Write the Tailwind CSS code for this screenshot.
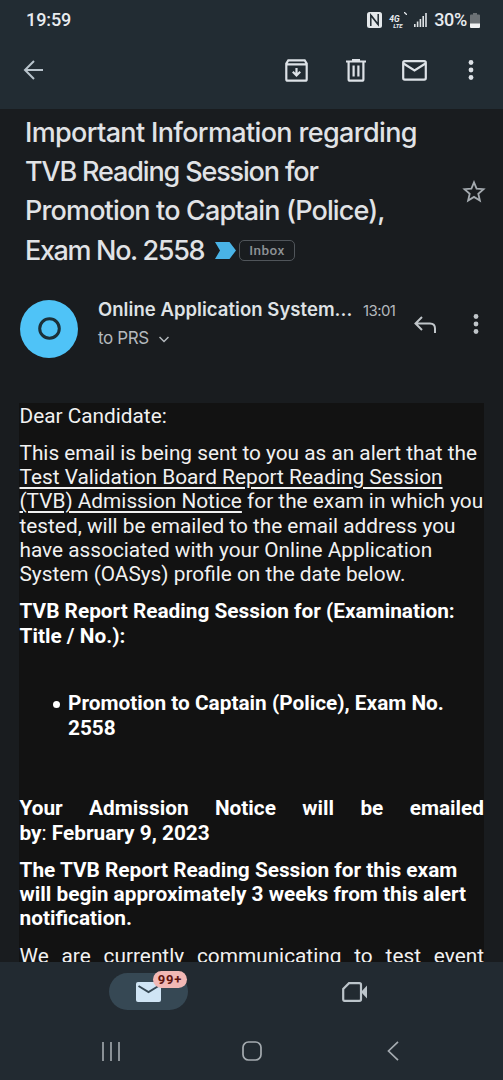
<!DOCTYPE html>
<html lang="en">
  <head>
    <meta charset="UTF-8" />
    <meta name="viewport" content="width=device-width, initial-scale=1.0" />
    <title>Mail</title>
    <script src="https://cdn.jsdelivr.net/npm/@tailwindcss/browser@4"></script>
  </head>

  <body class="bg-[#191c1f] w-[503px] h-[1080px] overflow-hidden flex flex-col font-['Roboto',sans-serif]">
    <header class="bg-[#222c33] h-[109px] shrink-0">
      <!-- Status bar -->
      <div class="h-10 flex items-center justify-between pl-[26px] pr-[23px] text-[#e8ebef]">
        <span class="text-[18px] font-medium leading-none tracking-[-0.1px]">19:59</span>
        <div class="flex items-center">
          <svg class="w-[15px] h-[16px] mr-[7px]" viewBox="0 0 15 16">
            <rect width="15" height="16" rx="2.5" fill="#e4e8eb" />
            <path d="M3.800 14V3.200L11 12.500M11.200 2v10.500L4.200 3.500" fill="none" stroke="#222c33" stroke-width="1.5" />
          </svg>
          <div class="relative w-[17px] h-[16px] mr-[8px] font-bold italic">
            <div class="flex flex-col pt-[3px]">
              <span class="text-[8.500px] leading-[8px]">4G</span>
              <span class="pl-[4px] text-[6px] leading-[6px]">LTE</span>
            </div>
            <svg class="absolute right-[-1px] top-0 w-[3px] h-[3px]" viewBox="0 0 3 3"><path d="M0 0l3 3" stroke="#e4e8eb" stroke-width="1.300" /></svg>
          </div>
          <svg class="w-[13px] h-[14px] mr-[7px]" viewBox="0 0 13 14" fill="#dfe3e6">
            <rect x="0" y="11" width="1.6" height="3" />
            <rect x="2.8" y="8.5" width="1.6" height="5.5" />
            <rect x="5.6" y="6" width="1.6" height="8" />
            <rect x="8.4" y="3" width="1.6" height="11" />
            <rect x="11.2" y="0" width="1.6" height="14" />
          </svg>
          <span class="text-[18px] font-medium leading-none tracking-[-0.3px] mr-[3px]">30%</span>
          <svg class="w-[10px] h-[15px]" viewBox="0 0 10 15">
            <path d="M3 0h4v1.500h2q1 0 1 1V11H0V2.500q0-1 1-1h2z" fill="#6b7175" />
            <path d="M0 10.500h10V14q0 1-1 1H1q-1 0-1-1z" fill="#f1f3f4" />
          </svg>
        </div>
      </div>
      <!-- Toolbar -->
      <div class="h-[60px] flex items-center text-[#dde2e7] pl-[23px]">
        <svg class="w-[21px] h-[20px]" viewBox="0 0 21 20" fill="none" stroke="#b9c4cc" stroke-width="2">
          <path d="M20 10H2M11 1L2 10l9 9" />
        </svg>
        <svg class="w-[23px] h-[23px] ml-[241px]" viewBox="0 0 23 23" fill="none" stroke="currentColor" stroke-width="2.2">
          <path d="M1.300 4.500L3.300 1.300h16.400L21.700 4.500v15.700q0 1.500-1.500 1.500H2.800q-1.500 0-1.500-1.500zM2 5.300h19" />
          <path d="M11.500 9v7M7.800 12.800l3.700 3.700 3.700-3.700" />
        </svg>
        <svg class="w-[20px] h-[23px] ml-[38px]" viewBox="0 0 20 23" fill="none" stroke="currentColor" stroke-width="2.200">
          <path d="M0 2.500h20M6 1.100h8M2.600 3v17.200q0 1.500 1.500 1.500h11.800q1.500 0 1.500-1.500V3" />
          <path d="M7.600 6.500v11M12.400 6.500v11" />
        </svg>
        <svg class="w-[25px] h-[21px] ml-[36px]" viewBox="0 0 25 21" fill="none" stroke="currentColor" stroke-width="2.200">
          <rect x="1.200" y="1.200" width="22.600" height="18.400" rx="1.500" />
          <path d="M1.500 3.500l11 7 11-7" />
        </svg>
        <svg class="w-[6px] h-[20px] ml-[41px]" viewBox="0 0 6 20" fill="currentColor">
          <circle cx="3" cy="2.500" r="2.400" /><circle cx="3" cy="10" r="2.400" /><circle cx="3" cy="17.500" r="2.400" />
        </svg>
      </div>
    </header>

    <main class="h-[853px] shrink-0 overflow-hidden">
      <!-- Subject -->
      <div class="flex pt-[4px] pl-[25px] h-[173px]">
        <h1 class="w-[437px] font-['Inter',sans-serif] font-medium text-[27px] leading-[39.2px] text-[#e1e3e6] whitespace-nowrap">
          <span class="block tracking-[-0.65px]">Important Information regarding</span>
          <span class="block tracking-[-1.15px]">TVB Reading Session for</span>
          <span class="block tracking-[-0.85px]">Promotion to Captain (Police),</span>
          <span class="flex items-center">
            <span class="tracking-[-1.35px] w-[190px]">Exam No. 2558</span>
            <svg class="w-[21px] h-[17px] mr-[3px]" viewBox="0 0 21 17"><path d="M0 0h14.500L21 8.500 14.500 17H0l5-8.500z" fill="#49b3e6" /></svg>
            <span class="w-[56px] h-[21px] border border-[#50555a] rounded-[5px] flex items-center justify-center font-['Roboto',sans-serif] text-[13.500px] font-medium tracking-[0.5px] text-[#8d9195]">Inbox</span>
          </span>
        </h1>
        <svg class="w-[24px] h-[23px] mt-[67px]" viewBox="0 0 24 23" fill="none" stroke="#a5abb0" stroke-width="1.800">
          <path d="M12 2.300l2.600 6.300 6.900.6-5.200 4.500 1.600 6.800-5.900-3.600-5.900 3.600 1.600-6.800-5.200-4.500 6.900-.6z" />
        </svg>
      </div>

      <!-- Sender -->
      <div class="flex pl-5 h-[121px] font-['Inter',sans-serif]">
        <div class="mt-[18px] w-[58px] h-[58px] rounded-full bg-[#4fc3f7] flex justify-center pt-[17px]">
          <svg class="w-[23px] h-[23px]" viewBox="0 0 23 23"><circle cx="11.500" cy="11.500" r="9.800" fill="none" stroke="#1b3039" stroke-width="3" /></svg>
        </div>
        <div class="ml-5 w-[316px] pt-[15px]">
          <div class="flex h-[26px] items-center whitespace-nowrap">
            <span class="w-[265px] text-[18.500px] font-semibold tracking-[0.04px] text-[#dfe2e5]">Online Application System...</span>
            <span class="text-[15px] text-[#b4b9bd] tracking-[-0.6px] pt-[2px]">13:01</span>
          </div>
          <div class="flex items-center h-[26px] mt-[3px] text-[#b4b9bd]">
            <span class="w-[61px] text-[17px] tracking-[-0.4px]">to PRS</span>
            <svg class="w-[10px] h-[7px] mt-px" viewBox="0 0 10 7" fill="none" stroke="currentColor" stroke-width="1.500"><path d="M.5 1L5 5.500 9.500 1" /></svg>
          </div>
        </div>
        <svg class="mt-[34px] w-[22px] h-[18px]" viewBox="0 0 22 18" fill="none" stroke="#c0c5c9" stroke-width="2">
          <path d="M8 1L1.500 7.500 8 14M2 7.500h14q5 0 5 5V17" />
        </svg>
        <svg class="mt-[32px] ml-[37px] w-[6px] h-[20px]" viewBox="0 0 6 20" fill="#c0c5c9">
          <circle cx="3" cy="2.500" r="2.400" /><circle cx="3" cy="10" r="2.400" /><circle cx="3" cy="17.500" r="2.400" />
        </svg>
      </div>

      <!-- Message -->
      <article class="ml-[19px] w-[465px] pt-[0.500px] pl-[0.500px] h-[600px] bg-[#121212] text-[#f1f1f1] text-[20.800px] leading-[24.250px]">
        <p class="mb-[13px]">Dear Candidate:</p>
        <p class="mb-[13px] whitespace-nowrap">
          This email is being sent to you as an alert that the<br />
          <u class="underline-offset-[3px] decoration-[1.500px]">Test Validation Board Report Reading Session<br />(TVB) Admission Notice</u> for the exam in which you<br />
          tested, will be emailed to the email address you<br />
          have associated with your Online Application<br />
          System (OASys) profile on the date below.
        </p>
        <p class="font-bold text-white whitespace-nowrap">TVB Report Reading Session for (Examination:<br />Title / No.):</p>
        <ul class="mt-[43.500px] mb-[56.500px] pl-[33px] font-bold text-white">
          <li class="flex whitespace-nowrap">
            <span class="w-[7px] h-[7px] rounded-full bg-white mt-[10px] mr-[8.500px]"></span>
            <span>Promotion to Captain (Police), Exam No.<br />2558</span>
          </li>
        </ul>
        <div class="mb-[13px] font-bold text-white">
          <p class="[text-align-last:justify]">Your Admission Notice will be emailed</p>
          <p>by<span class="font-normal">:</span> February 9, 2023</p>
        </div>
        <p class="mb-[13px] font-bold text-white whitespace-nowrap">The TVB Report Reading Session for this exam<br />will begin approximately 3 weeks from this alert<br />notification.</p>
        <p class="[text-align-last:justify]">We are currently communicating to test event</p>
      </article>
    </main>

    <footer class="relative z-10 bg-[#222a31] h-[118px] shrink-0">
      <!-- Mail and Meet tabs -->
      <div class="flex pt-[11px] pl-[109px]">
        <div class="relative w-[79px] h-[37px] rounded-full bg-[#364854]">
          <svg class="absolute left-[27px] top-[9px] w-[25px] h-[20px]" viewBox="0 0 25 20">
            <rect width="25" height="20" rx="2" fill="#d0e5f5" />
            <path d="M2.500 4l10 6 10-6" fill="none" stroke="#364854" stroke-width="2" />
          </svg>
          <span class="absolute left-[44px] top-[-2px] w-[34px] h-[17px] rounded-full bg-[#f2b8b5] text-[#601410] text-[13px] font-bold tracking-[0.8px] leading-[17px] text-center">99+</span>
        </div>
        <svg class="ml-[154px] mt-[9px] w-[25px] h-[20px]" viewBox="0 0 25 20">
          <path d="M7 1.200h10.500q1.500 0 1.500 1.500v14.600q0 1.500-1.500 1.500h-15q-1.300 0-1.300-1.500V7z" fill="none" stroke="#bcc4ca" stroke-width="2.200" />
          <path d="M19 10l6-6.500v13z" fill="#bcc4ca" />
        </svg>
      </div>
      <!-- System navigation -->
      <div class="flex items-center h-[20px] mt-[31px] pl-[102px] text-[#a5abb0]">
        <svg class="w-[18px] h-[19px]" viewBox="0 0 18 19" stroke="currentColor" stroke-width="1.600"><path d="M1 0v19M9 0v19M17 0v19" /></svg>
        <svg class="ml-[122px] w-[20px] h-[20px]" viewBox="0 0 20 20" fill="none" stroke="currentColor" stroke-width="1.700"><rect x="1" y="1" width="18" height="18" rx="5.500" /></svg>
        <svg class="ml-[125px] w-[12px] h-[20px]" viewBox="0 0 12 20" fill="none" stroke="currentColor" stroke-width="1.700"><path d="M11 .8L1.500 10l9.500 9.200" /></svg>
      </div>
    </footer>
  </body>
</html>
